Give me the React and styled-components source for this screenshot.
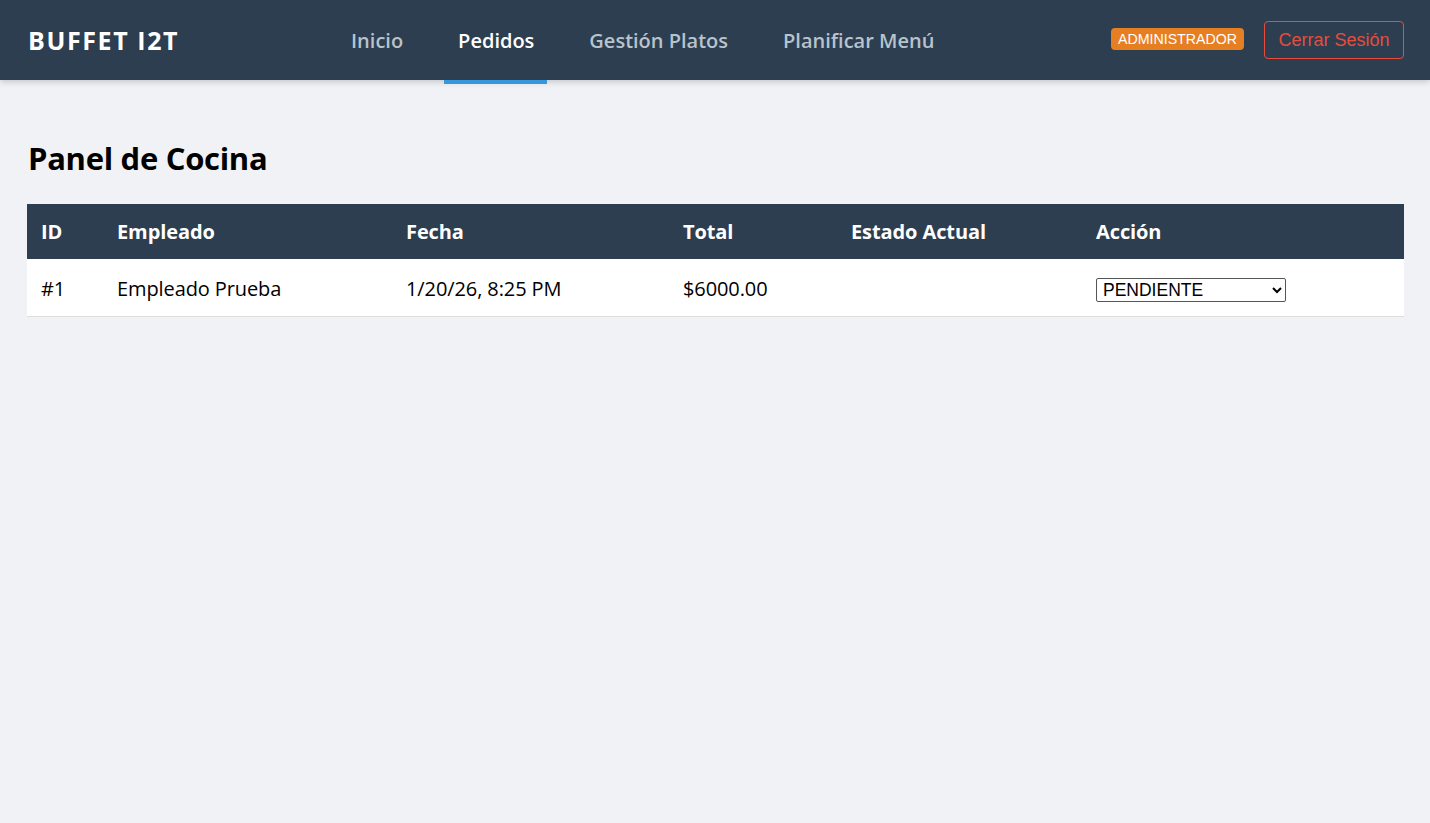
import React from "react";
import styled, { createGlobalStyle } from "styled-components";

const Global = createGlobalStyle`
  html, body { margin: 0; padding: 0; }
  body {
    background: #f0f2f5;
    font-family: "Open Sans", "Noto Sans", sans-serif;
    color: #000;
  }
`;

const NavBar = styled.header`
  height: 80px;
  background: #2c3e50;
  display: flex;
  align-items: center;
  padding: 0 26px 0 28px;
  box-shadow: 0 2px 6px rgba(0, 0, 0, 0.18);
  position: relative;
`;

const Logo = styled.div`
  color: #fff;
  font-weight: 700;
  font-size: 25px;
  letter-spacing: 1.6px;
  width: 309px;
`;

const Links = styled.nav`
  display: flex;
  align-items: flex-start;
  align-self: flex-start;
  height: 80px;
  gap: 28px;
  flex: 1;
`;

const NavLink = styled.a`
  display: flex;
  align-items: center;
  box-sizing: border-box;
  height: 84px;
  padding: 0 13px 0 14px;
  font-size: 20px;
  font-weight: 600;
  letter-spacing: 0px;
  color: ${(p) => (p.$active ? "#ffffff" : "#b8c3cc")};
  border-bottom: 4px solid ${(p) => (p.$active ? "#3498db" : "transparent")};
  text-decoration: none;
  cursor: pointer;
`;

const Right = styled.div`
  display: flex;
  align-items: center;
  gap: 20px;
`;

const Badge = styled.span`
  display: inline-flex;
  align-items: center;
  height: 22px;
  box-sizing: border-box;
  background: #e67e22;
  color: #fff;
  font-family: "Liberation Sans", Arial, sans-serif;
  font-size: 14.2px;
  padding: 0 7px;
  border-radius: 4px;
  margin-top: -2px;
`;

const LogoutButton = styled.button`
  background: transparent;
  border: 1px solid #e74c3c;
  color: #e74c3c;
  font-family: "Liberation Sans", Arial, sans-serif;
  font-size: 18px;
  padding: 0;
  height: 38px;
  width: 140px;
  border-radius: 4px;
  cursor: pointer;
`;

const Main = styled.main`
  padding: 0 26px 0 27px;
`;

const Title = styled.h1`
  margin: 58px 0 26px 1px;
  font-size: 31px;
  font-weight: 700;
  letter-spacing: -0.3px;
  line-height: 40px;
`;

const Table = styled.table`
  width: 100%;
  border-collapse: collapse;
  table-layout: fixed;
  background: #fff;
`;

const Th = styled.th`
  background: #2c3e50;
  color: #fff;
  text-align: left;
  font-size: 20px;
  font-weight: 700;
  letter-spacing: -0.1px;
  height: 55px;
  padding: 0 14px;
`;

const Td = styled.td`
  font-size: 20px;
  letter-spacing: -0.1px;
  height: 56px;
  padding: 1px 14px 0;
  border-bottom: 1px solid #dddddd;
`;

const Select = styled.select`
  width: 190px;
  height: 24px;
  font-family: "Liberation Sans", Arial, sans-serif;
  font-size: 17.5px;
  border: 1px solid #555;
  border-radius: 2px;
  background: #fff;
  color: #000;
  padding: 0 2px;
`;

const cols = [76, 289, 277, 168, 245, 322];

export default function App() {
  return (
    <>
      <Global />
      <NavBar>
        <Logo>BUFFET I2T</Logo>
        <Links>
          <NavLink>Inicio</NavLink>
          <NavLink $active>Pedidos</NavLink>
          <NavLink>Gestión Platos</NavLink>
          <NavLink>Planificar Menú</NavLink>
        </Links>
        <Right>
          <Badge>ADMINISTRADOR</Badge>
          <LogoutButton>Cerrar Sesión</LogoutButton>
        </Right>
      </NavBar>
      <Main>
        <Title>Panel de Cocina</Title>
        <Table>
          <colgroup>
            {cols.map((w, i) => (
              <col key={i} style={{ width: w }} />
            ))}
          </colgroup>
          <thead>
            <tr>
              <Th>ID</Th>
              <Th>Empleado</Th>
              <Th>Fecha</Th>
              <Th>Total</Th>
              <Th>Estado Actual</Th>
              <Th>Acción</Th>
            </tr>
          </thead>
          <tbody>
            <tr>
              <Td>#1</Td>
              <Td>Empleado Prueba</Td>
              <Td>1/20/26, 8:25 PM</Td>
              <Td>$6000.00</Td>
              <Td></Td>
              <Td>
                <Select defaultValue="PENDIENTE">
                  <option>PENDIENTE</option>
                  <option>EN PREPARACION</option>
                  <option>LISTO</option>
                  <option>ENTREGADO</option>
                </Select>
              </Td>
            </tr>
          </tbody>
        </Table>
      </Main>
    </>
  );
}
